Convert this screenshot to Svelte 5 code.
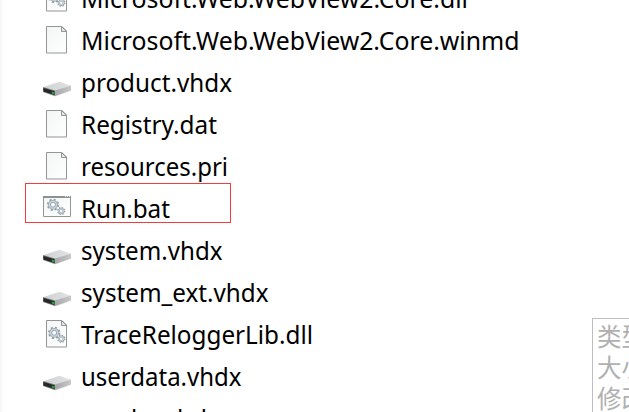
<script>
  const files = [
    { name: 'Microsoft.Web.WebView2.Core.dll', icon: 'dll', width: 388 },
    { name: 'Microsoft.Web.WebView2.Core.winmd', icon: 'file', width: 438.5 },
    { name: 'product.vhdx', icon: 'disk', width: 151 },
    { name: 'Registry.dat', icon: 'file', width: 136 },
    { name: 'resources.pri', icon: 'file', width: 147 },
    { name: 'Run.bat', icon: 'bat', width: 89 },
    { name: 'system.vhdx', icon: 'disk', width: 141.5 },
    { name: 'system_ext.vhdx', icon: 'disk', width: 187.5 },
    { name: 'TraceReloggerLib.dll', icon: 'dll', width: 233 },
    { name: 'userdata.vhdx', icon: 'disk', width: 160.5 },
    { name: 'vendor.vhdx', icon: 'disk', width: 139 }
  ];
  const details = ['类型: VHDX', '大小: 1.2 GB', '修改日期:'];
</script>

{#snippet gear(x, y, r)}
  <g transform="translate({x} {y})" fill="none">
    <circle r={r} stroke="#95a0a7" stroke-width={r * 0.42} stroke-dasharray="{r * 0.4} {r * 0.3854}" />
    <circle r={r * 0.67} stroke="#98a4ac" stroke-width={r * 0.56} />
    <circle r={r * 0.68} stroke="#c6d3db" stroke-width={r * 0.3} />
  </g>
{/snippet}

<main>
  <div class="edge"></div>
  <ul>
    {#each files as file}
      <li>
        <svg class="icon" viewBox="0 0 30 42">
          <defs>
            <linearGradient id="paper" x2="1" y2="1"><stop stop-color="#f3f5f5" /><stop offset="1" stop-color="#fff" /></linearGradient>
            <linearGradient id="lid"><stop stop-color="#cfd0d2" /><stop offset="1" stop-color="#e2e3e5" /></linearGradient>
            <linearGradient id="side"><stop stop-color="#a5a7a9" /><stop offset="1" stop-color="#c7c8ca" /></linearGradient>
          </defs>
          {#if file.icon === 'disk'}
            <path d="M1 34.5 12 38.5 29.5 32.5 12 37z" fill="#e0e0e0" />
            <path d="M0 29.2 16.5 23.7 28 27.8 12 33z" fill="url(#lid)" />
            <path d="M12 32.6 28 27.6V32.4L12 38z" fill="url(#side)" />
            <path d="M0 29 12 32.5V38L0 34z" fill="#77797a" />
            <path d="M.5 30 11.5 33.2V37L.5 33.5z" fill="#252827" />
            <path d="M8.8 33.6 11.5 34.2v2.1l-2.7-.6z" fill="#23a33c" />
          {:else if file.icon === 'bat'}
            <path d="M.5 12.5h27v20H.5z" fill="url(#paper)" stroke="#929698" />
            <path d="M0 12h28v2H0z" fill="#8c9193" />
            <path d="M22 12.5h1M24 12.5h1M26 12.5h1" stroke="#eee" />
            {@render gear(10, 20.8, 5.1)}
            {@render gear(18.2, 27, 3.4)}
          {:else}
            <path d="M3.5 10.5H19L23.5 15v22h-20z" fill="url(#paper)" stroke="#929697" />
            <path d="M18.5 10.5V15.5h5z" fill="#e5e7e8" stroke="#929697" />
            {#if file.icon === 'dll'}
              {@render gear(11.2, 22.8, 5.1)}
              {@render gear(18.3, 28.8, 3.4)}
            {/if}
          {/if}
        </svg>
        <svg class="name" width="500" height="42">
          <text x="0" y="34" textLength={file.width - (file.name.endsWith('l') ? 1 : 0)} lengthAdjust="spacingAndGlyphs">{file.name}</text>
        </svg>
      </li>
    {/each}
  </ul>
  <div class="highlight"></div>
  <aside>
    {#each details as line}<div>{line}</div>{/each}
  </aside>
</main>

<style>
  main { position: relative; width: 629px; height: 412px; overflow: hidden; background: #fff; display: flex; }
  .edge { width: 2px; background: #f7f7f7; flex: none; }
  ul { list-style: none; margin: -26px 0 0 41px; padding: 0; }
  li { display: flex; height: 42px; }
  .icon { width: 30px; height: 42px; flex: none; }
  .name { margin-left: 8px; overflow: visible; flex: none; }
  text { font: 25px "Noto Sans", "Open Sans", sans-serif; fill: #000; }
  .highlight { position: absolute; left: 25px; top: 183px; width: 204px; height: 38px; border: 1px solid #f23c3c; }
  aside { position: absolute; left: 592px; top: 318px; width: 180px; height: 110px; box-sizing: border-box; padding: 1px 4px; border: 1px solid #bebebe; background: #fff; color: #b0b0b0; font: 24.5px/31px "Noto Sans CJK SC", sans-serif; white-space: nowrap; }
</style>
